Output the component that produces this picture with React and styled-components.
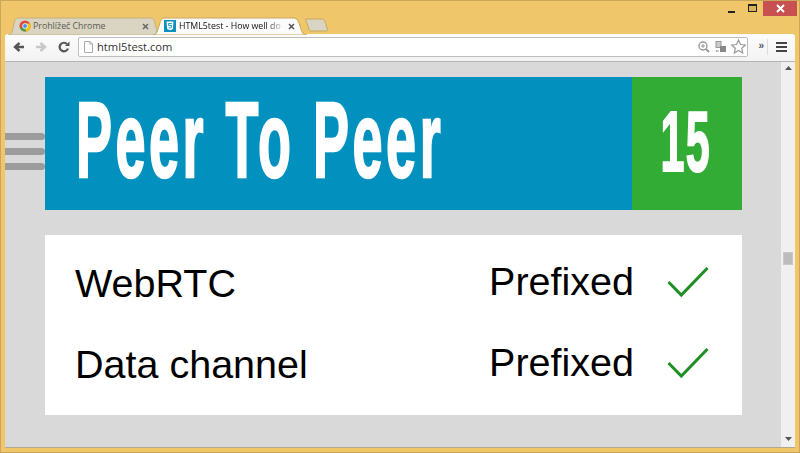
import React from "react";
import styled, { createGlobalStyle } from "styled-components";

const Global = createGlobalStyle`
  html, body { margin: 0; padding: 0; overflow: hidden; }
  body { font-family: "Liberation Sans", Arial, sans-serif; }
`;
const Win = styled.div`
  width: 800px; height: 453px; box-sizing: border-box; background: #efc66a;
  border: 1px solid #c9a65a; display: flex; flex-direction: column; padding: 0 4px 4px; position: relative;
`;
const TitleBar = styled.div`height: 33px; display: flex; align-items: flex-end; position: relative; flex: none;`;
const Tab = styled.div`
  position: relative; width: ${p => p.$w}px; height: 18px; margin-left: ${p => p.$ml}px; margin-bottom: -1px; z-index: ${p => p.$active ? 2 : 1};
  display: flex; align-items: center; padding: 0 ${p => p.$active ? 12 : 9}px 0 11px; box-sizing: border-box; gap: ${p => p.$active ? 3 : 2}px;
`;
const TabShape = styled.svg`position: absolute; left: 0; top: 0; z-index: 0;`;
const Fav = styled.svg`position: relative; flex: none;`;
const TabText = styled.span`
  position: relative; font: 8.8px "Open Sans", "Liberation Sans", sans-serif; white-space: nowrap; flex: 1; min-width: 0;
  color: ${p => p.$active ? "#111" : "#5a5a50"};
  ${p => p.$active ? "mask-image: linear-gradient(90deg,#000 82%,transparent 100%);" : ""}
`;
const Close = styled.svg`position: relative; flex: none;`;
const NewTab = styled.svg`margin-left: -2px; margin-bottom: 2px; flex: none;`;
const WinCtl = styled.div`position: absolute; right: -2px; top: 0; display: flex; align-items: flex-start;`;
const CtlBtn = styled.div`width: ${p => p.$w}px; height: 15px; display: flex; align-items: center; justify-content: center; background: ${p => p.$red ? "#c75050" : "transparent"};`;
const Toolbar = styled.div`
  height: 28px; flex: none; background: linear-gradient(#fcfcfc,#f3f3f3); border-bottom: 1px solid #b5b5b5; border-radius: 3px 3px 0 0;
  display: flex; align-items: center; padding: 0 8px 2px 8px; box-sizing: border-box; position: relative;
`;
const NavIcon = styled.svg`flex: none; margin-right: ${p => p.$mr}px;`;
const Omni = styled.div`
  flex: 1; height: 20px; border: 1px solid #bdbdbd; border-radius: 2px; background: #fff; display: flex; align-items: center;
  padding: 0 1px 0 5px; box-sizing: border-box; margin-left: 8px; gap: 5px;
`;
const Url = styled.span`font: 11.2px "Open Sans", "Liberation Sans", sans-serif; color: #333; flex: 1; margin-left: -1px;`;
const Chev = styled.span`font: bold 10px "Liberation Sans", sans-serif; color: #555; margin: 0 3px 2px 10px;`;
const Sep = styled.div`width: 1px; height: 16px; background: #ddd; margin-right: 8px;`;
const Viewport = styled.div`flex: 1; display: flex; min-height: 0; border-bottom: 1px solid #b0a98f;`;
const Page = styled.div`flex: 1; min-width: 0; background: #d9d9d9; position: relative; padding: 15px 39px 0 40px; display: flex; flex-direction: column; gap: 25px;`;
const Burger = styled.div`position: absolute; left: 0; top: 71px; display: flex; flex-direction: column; gap: 8px;`;
const BurgerBar = styled.div`width: 40px; height: 7px; border-radius: 0 4px 4px 0; background: #9c9c9c;`;
const Banner = styled.div`height: 133px; display: flex; background: #0291be; flex: none;`;
const TitleWrap = styled.div`flex: 1; min-width: 0; padding-left: 31px; display: flex; align-items: center; overflow: hidden;`;
const Title = styled.h2`
  margin: 0; color: #fff; font: bold 108px/1 "Liberation Sans", sans-serif; transform-origin: left center; transform: scaleX(.5);
  letter-spacing: 7px; -webkit-text-stroke: 2.400px #fff; white-space: nowrap; position: relative; top: -4px;
`;
const Score = styled.div`width: 110px; flex: none; background: #33ac36; display: flex; align-items: center; justify-content: center; overflow: hidden;`;
const ScoreNum = styled.span`color: #fff; font: bold 86px/1 "Liberation Sans", sans-serif; transform: scaleX(.5); letter-spacing: 3px; -webkit-text-stroke: 2px #fff; position: relative; top: -3px; left: -1px;`;
const Card = styled.div`height: 180px; background: #fff; padding: 8px 33px 0 30px; box-sizing: border-box; display: flex; flex-direction: column;`;
const Row = styled.div`height: 81px; display: flex; align-items: center;`;
const Name = styled.span`flex: 1; font-size: 39.5px; color: #000;`;
const Value = styled.span`font-size: 39.5px; color: #000; position: relative; top: -2px;`;
const Check = styled.svg`margin-left: 33px; flex: none; position: relative; top: -1px;`;
const Scrollbar = styled.div`width: 14px; flex: none; background: #f0f0f0; position: relative; display: flex; flex-direction: column; align-items: center; justify-content: space-between; padding: 4px 0 6px; box-sizing: border-box;`;
const Thumb = styled.div`position: absolute; left: 2px; top: 190px; width: 10px; height: 13px; box-sizing: border-box; background: #bcbcbc; border: 1px solid #c8c8c8;`;

const Chrome = () => (
  <Fav width="12" height="12" viewBox="0 0 14 14">
    <circle cx="7" cy="7" r="6.500" fill="#dd4b39" />
    <path d="M7 7 L1.500 10 A6.500 6.500 0 0 0 8 13.500Z" fill="#3aa757" />
    <path d="M7 4 H13 A6.500 6.500 0 0 1 8 13.500 L7 7Z" fill="#f4c20d" />
    <circle cx="7" cy="7" r="2.800" fill="#4285f4" stroke="#fff" />
  </Fav>
);
const Html5 = () => (
  <Fav width="12" height="12" viewBox="0 0 12 12">
    <rect width="12" height="12" fill="#0a8fbe" />
    <path d="M2.500 1.500h7l-.6 7.500-2.900 1.200L3.100 9Z" fill="#fff" />
    <path d="M7.700 3.500H4.500l.15 2h2.900l-.2 2L6 8l-1.300-.5" fill="none" stroke="#0a8fbe" strokeWidth=".9" />
  </Fav>
);
const X = ({ c }) => (
  <Close width="7" height="7" viewBox="0 0 7 7"><path d="M1 1l5 5M6 1l-5 5" stroke={c} strokeWidth="1.500" /></Close>
);
const Tick = () => (
  <Check width="42" height="32" viewBox="0 0 42 32">
    <path d="M1.500 15 L14.300 28 L40.500 1" fill="none" stroke="#1e8f25" strokeWidth="3" />
  </Check>
);

export default function App() {
  return (
    <>
      <Global />
      <Win>
        <TitleBar>
          <Tab $w={150} $ml={3}>
            <TabShape width="150" height="18" viewBox="0 0 150 18"><path d="M0 18C4 18 4 15 6 7 7 2 8 1 11 1H143C146 1 146 3 147 7L149 13 148 17 146 18Z" fill="#dad5c3" stroke="#c3b27d" /></TabShape>
            <Chrome />
            <TabText>Prohlížeč Chrome</TabText>
            <X c="#666" />
          </Tab>
          <Tab $w={154} $ml={-5} $active>
            <TabShape width="154" height="18" viewBox="0 0 154 18"><path d="M0 18C3 18 4 16 6 9 8 2 9 1 12 1H140C143 1 145 2 147 9 149 16 150 18 154 18Z" fill="#fbfbfb" stroke="#c9a65a" /></TabShape>
            <Html5 />
            <TabText $active>HTML5test - How well do</TabText>
            <X c="#555" />
          </Tab>
          <NewTab width="24" height="14" viewBox="0 0 24 14"><path d="M1 1H17C19 1 20 3 21 7 22 10 23 13 22 13H6C4 13 4 11 3 8 2 5 0 1 1 1Z" fill="#dad5c3" stroke="#c3a863" /></NewTab>
          <WinCtl>
            <CtlBtn $w={21}><svg width="8" height="10" viewBox="0 0 8 10"><rect y="7" width="7" height="2" fill="#222" /></svg></CtlBtn>
            <CtlBtn $w={21}><svg width="10" height="9" viewBox="0 0 10 9"><rect x=".5" y=".5" width="8" height="7" fill="#d9b25c" stroke="#222" /><rect x="1" y="0" width="7" height="2" fill="#222" /></svg></CtlBtn>
            <CtlBtn $w={34} $red><svg width="9" height="9" viewBox="0 0 9 9"><path d="M1 1l7 7M8 1l-7 7" stroke="#fff" strokeWidth="2" /></svg></CtlBtn>
          </WinCtl>
        </TitleBar>
        <Toolbar>
          <NavIcon $mr={10} width="12" height="12" viewBox="0 0 12 12"><path d="M11 6H3M6.500 2L2 6l4.500 4" fill="none" stroke="#555" strokeWidth="2.400" /></NavIcon>
          <NavIcon $mr={11} width="12" height="12" viewBox="0 0 12 12"><path d="M1 6h8M5.500 2L10 6l-4.500 4" fill="none" stroke="#c8c8c8" strokeWidth="2.400" /></NavIcon>
          <NavIcon $mr={0} width="12" height="12" viewBox="0 0 12 12"><path d="M10 7.500A4.300 4.300 0 1 1 9 3" fill="none" stroke="#555" strokeWidth="2.200" /><path d="M7 5h4.500V.5Z" fill="#555" /></NavIcon>
          <Omni>
            <svg width="9" height="12" viewBox="0 0 9 12"><path d="M.5.500h5.500l2.500 2.500v8.500H.5Z" fill="#fff" stroke="#aaa" /><path d="M6 .5V3h2.500" fill="none" stroke="#aaa" /></svg>
            <Url>html5test.com</Url>
            <svg width="12" height="12" viewBox="0 0 12 12"><circle cx="5" cy="5" r="4" fill="none" stroke="#999" strokeWidth="1.400" /><path d="M8 8l3 3" stroke="#999" strokeWidth="2" /><path d="M3 5h4M5 3v4" stroke="#999" /></svg>
            <svg width="11" height="12" viewBox="0 0 11 12"><rect x="1" y="0.500" width="5" height="6" fill="#ccc" stroke="#999" /><rect x="5" y="5" width="6" height="6" fill="#888" /><path d="M1 9l1 2M4 10h-2" stroke="#999" /></svg>
            <svg width="15" height="15" viewBox="0 0 15 15"><path d="M7.500 1l2 4.500 4.800.5-3.600 3.200 1 4.800-4.200-2.500-4.200 2.500 1-4.800L.7 6l4.800-.5Z" fill="#fff" stroke="#999" strokeWidth="1.200" /></svg>
          </Omni>
          <Chev>»</Chev>
          <Sep />
          <svg width="11" height="10" viewBox="0 0 11 10"><path d="M0 1h11M0 5h11M0 9h11" stroke="#444" strokeWidth="2" /></svg>
        </Toolbar>
        <Viewport>
          <Page>
            <Burger><BurgerBar /><BurgerBar /><BurgerBar /></Burger>
            <Banner>
              <TitleWrap><Title>Peer To Peer</Title></TitleWrap>
              <Score><ScoreNum>15</ScoreNum></Score>
            </Banner>
            <Card>
              <Row><Name>WebRTC</Name><Value>Prefixed</Value><Tick /></Row>
              <Row><Name>Data channel</Name><Value>Prefixed</Value><Tick /></Row>
            </Card>
          </Page>
          <Scrollbar>
            <svg width="7" height="4" viewBox="0 0 7 4"><path d="M3.500 0L7 4H0Z" fill="#555" /></svg>
            <Thumb />
            <svg width="7" height="4" viewBox="0 0 7 4"><path d="M3.500 4L7 0H0Z" fill="#555" /></svg>
          </Scrollbar>
        </Viewport>
      </Win>
    </>
  );
}
